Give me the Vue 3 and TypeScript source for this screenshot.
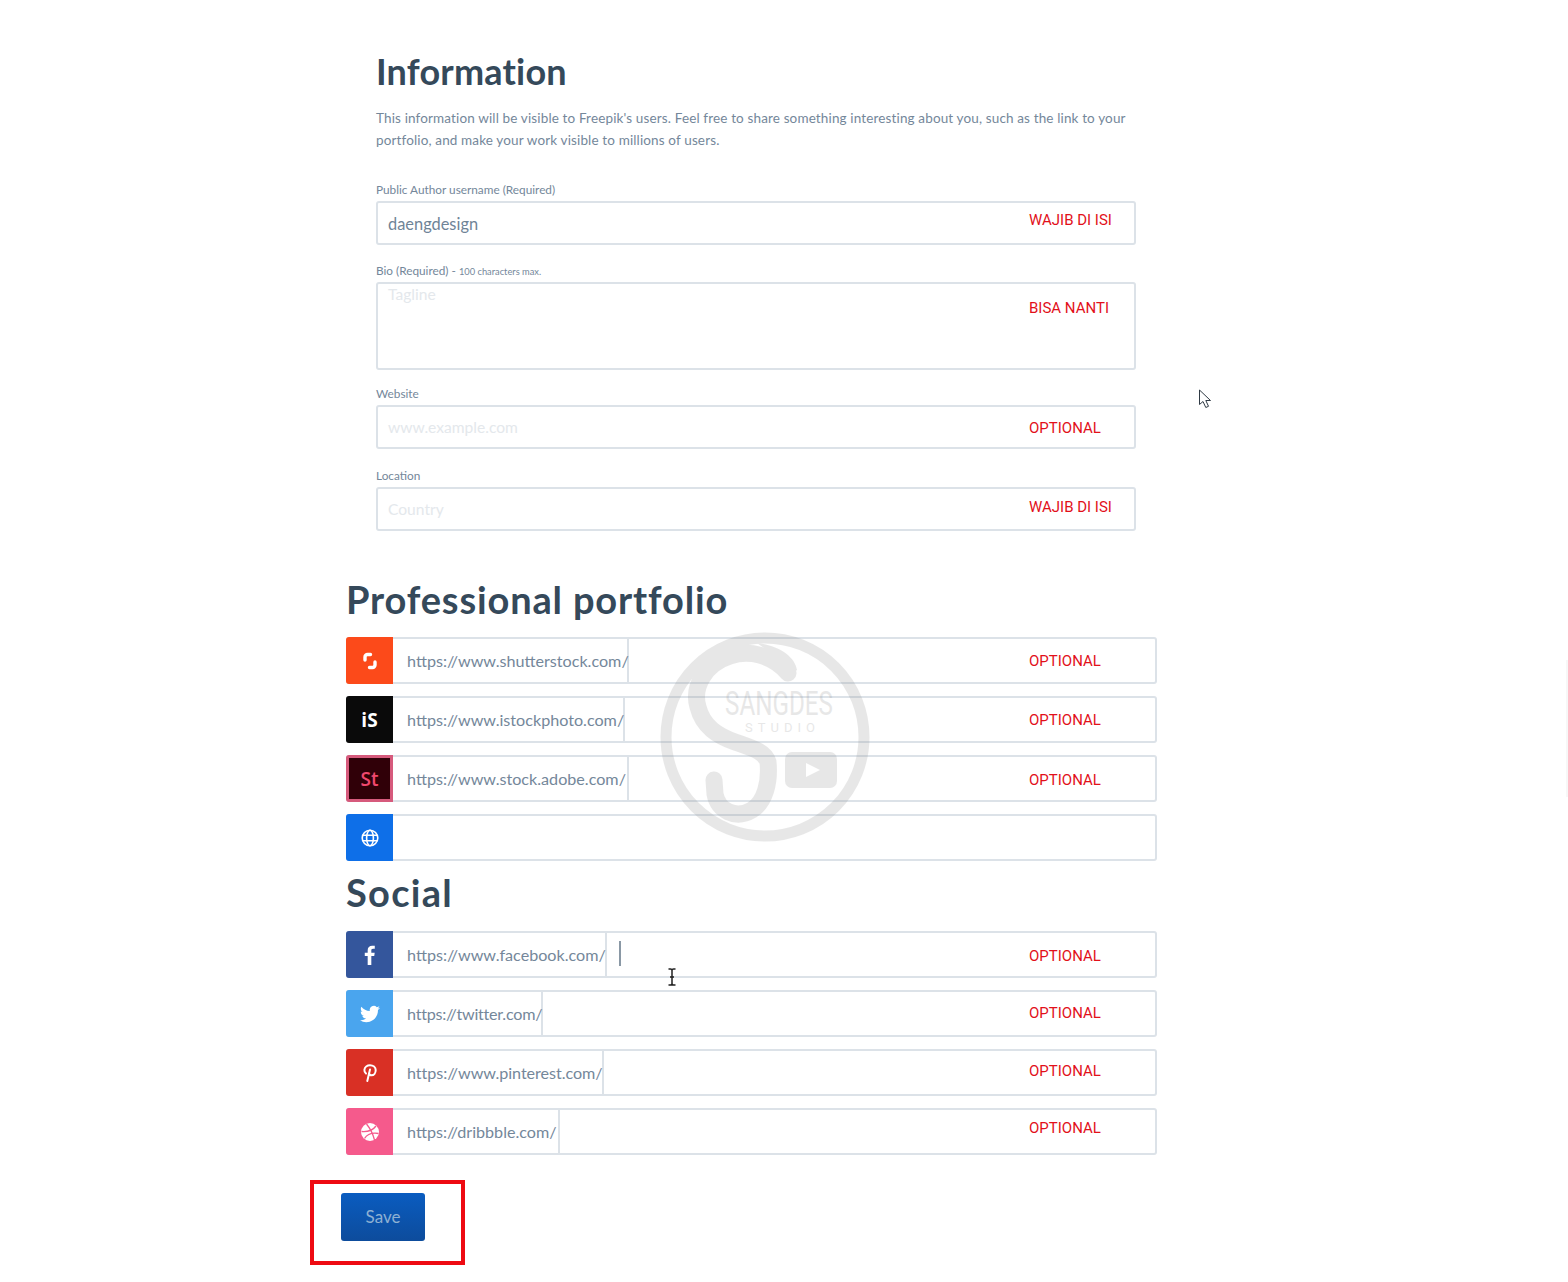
<script setup lang="ts">
type Field = { label: string; small?: string; height: number; gap: number; value?: string; placeholder?: string; note: string; noteTop: number }
type Row = { key: string; color: string; prefix?: string; prefixWidth?: number; spacing?: number; note?: string; noteTop?: number }

const fields: Field[] = [
  { label: 'Public Author username (Required)', height: 44, gap: 32, value: 'daengdesign', note: 'WAJIB DI ISI', noteTop: 7 },
  { label: 'Bio (Required) - ', small: '100 characters max.', height: 88, gap: 19, placeholder: 'Tagline', note: 'BISA NANTI', noteTop: 14 },
  { label: 'Website', height: 44, gap: 17, placeholder: 'www.example.com', note: 'OPTIONAL', noteTop: 11 },
  { label: 'Location', height: 44, gap: 20, placeholder: 'Country', note: 'WAJIB DI ISI', noteTop: 8 },
]

const portfolio: Row[] = [
  { key: 'shutterstock', color: '#fc4a1a', prefix: 'https://www.shutterstock.com/', prefixWidth: 236, note: 'OPTIONAL', noteTop: 12 },
  { key: 'istock', color: '#0a0a0a', prefix: 'https://www.istockphoto.com/', prefixWidth: 232, note: 'OPTIONAL', noteTop: 12 },
  { key: 'adobe', color: '#300008', prefix: 'https://www.stock.adobe.com/', prefixWidth: 236, note: 'OPTIONAL', noteTop: 13 },
  { key: 'web', color: '#0e6fe8' },
]

const social: Row[] = [
  { key: 'facebook', color: '#34569c', prefix: 'https://www.facebook.com/', prefixWidth: 214, note: 'OPTIONAL', noteTop: 13 },
  { key: 'twitter', color: '#4aa5ee', prefix: 'https://twitter.com/', prefixWidth: 150, spacing: -0.24, note: 'OPTIONAL', noteTop: 11 },
  { key: 'pinterest', color: '#d93025', prefix: 'https://www.pinterest.com/', prefixWidth: 211, spacing: -0.06, note: 'OPTIONAL', noteTop: 10 },
  { key: 'dribbble', color: '#f55a8c', prefix: 'https://dribbble.com/', prefixWidth: 167, note: 'OPTIONAL', noteTop: 8 },
]
</script>

<template>
  <div class="page">
    <section class="info">
      <h1 class="info-title">Information</h1>
      <p class="intro">
        This information will be visible to Freepik's users. Feel free to share something interesting about you, such as the link to your
        portfolio, and make your work visible to millions of users.
      </p>

      <div v-for="f in fields" :key="f.label" class="field" :style="{ marginTop: f.gap + 'px' }">
        <label class="label">{{ f.label }}<small v-if="f.small">{{ f.small }}</small></label>
        <div class="box" :class="{ tall: f.height > 44 }" :style="{ height: f.height + 'px' }">
          <span v-if="f.value" class="value">{{ f.value }}</span>
          <span v-else class="placeholder">{{ f.placeholder }}</span>
          <span class="note" :style="{ top: f.noteTop + 'px' }">{{ f.note }}</span>
        </div>
      </div>
    </section>

    <h2 class="title portfolio-title">Professional portfolio</h2>
    <div class="rows">
      <div v-for="r in portfolio" :key="r.key" class="row">
        <div class="icon" :class="r.key" :style="{ background: r.color }">
          <svg v-if="r.key === 'shutterstock'" width="18" height="18" viewBox="0 0 18 18" fill="none" stroke="#fff" stroke-width="3.4" stroke-linecap="round">
            <path d="M9.500 2.500H6.500A2.500 2.500 0 0 0 4 5V8" />
            <path d="M8.500 15.500H11.500A2.500 2.500 0 0 0 14 13V10" />
          </svg>
          <span v-else-if="r.key === 'istock'" class="glyph">iS</span>
          <span v-else-if="r.key === 'adobe'" class="glyph">St</span>
          <svg v-else width="18" height="18" viewBox="0 0 18 18" fill="none" stroke="#fff" stroke-width="1.6">
            <circle cx="9" cy="9" r="7.8" />
            <ellipse cx="9" cy="9" rx="3.400" ry="7.800" />
            <path d="M1.800 6.300H16.200M1.800 11.700H16.200" />
          </svg>
        </div>
        <div v-if="r.prefix" class="prefix" :style="{ width: r.prefixWidth + 'px', letterSpacing: (r.spacing ?? 0) + 'px' }">{{ r.prefix }}</div>
        <span v-if="r.note" class="note" :style="{ top: r.noteTop + 'px' }">{{ r.note }}</span>
      </div>
    </div>

    <h2 class="title social-title">Social</h2>
    <div class="rows">
      <div v-for="r in social" :key="r.key" class="row">
        <div class="icon" :style="{ background: r.color }">
          <svg v-if="r.key === 'facebook'" width="11" height="20" viewBox="0 0 12 22" fill="#fff">
            <path d="M8 22V12.200H11.200L11.700 8.400H8V6.100C8 5 8.300 4.200 9.900 4.200H11.800V.800C11.500.800 10.300.700 8.900.700 6 .700 4 2.400 4 5.700V8.400H.800V12.200H4V22Z" />
          </svg>
          <svg v-else-if="r.key === 'twitter'" width="20" height="20" viewBox="0 0 24 24" fill="#fff">
            <path d="M23.950 4.570a10 10 0 0 1-2.820.77 4.960 4.960 0 0 0 2.160-2.720c-.95.550-2 .96-3.130 1.190a4.920 4.920 0 0 0-8.380 4.480C7.690 8.100 4.070 6.130 1.640 3.160a4.820 4.820 0 0 0-.66 2.470c0 1.710.87 3.210 2.190 4.100a4.900 4.900 0 0 1-2.230-.62v.06a4.920 4.920 0 0 0 3.950 4.830 5 5 0 0 1-2.210.08 4.940 4.940 0 0 0 4.600 3.420A9.870 9.870 0 0 1 0 19.540a14 14 0 0 0 7.560 2.210c9.050 0 14-7.500 14-13.980 0-.21 0-.42-.02-.63a9.940 9.940 0 0 0 2.460-2.550z" />
          </svg>
          <svg v-else-if="r.key === 'pinterest'" width="14" height="18" viewBox="0 0 14 18" fill="none" stroke="#fff" stroke-width="2" stroke-linecap="round">
            <path d="M3 9.500C1.800 8.400 1.200 7.300 1.400 5.800 1.700 3 4.200 1.200 7 1.200c3.100 0 5.700 1.900 5.700 4.800 0 3-1.800 5.300-4.100 5.300-1.300 0-2.300-.8-2.400-1.700" />
            <path d="M7 5.500 4.300 17" />
          </svg>
          <svg v-else width="18" height="18" viewBox="0 0 18 18">
            <circle cx="9" cy="9" r="9" fill="#fff" />
            <g fill="none" stroke="#f55a8c" stroke-width="1.300">
              <path d="M5.500 1C8 4 11.500 9 13.500 17" />
              <path d="M.500 8.500C6 9 12 7 15 3" />
              <path d="M3.500 15.500C6 11.500 11 9.500 17.500 10.500" />
            </g>
          </svg>
        </div>
        <div class="prefix" :style="{ width: r.prefixWidth + 'px', letterSpacing: (r.spacing ?? 0) + 'px' }">{{ r.prefix }}</div>
        <span v-if="r.key === 'facebook'" class="caret"></span>
        <span class="note" :style="{ top: r.noteTop + 'px' }">{{ r.note }}</span>
      </div>
    </div>

    <div class="save-wrap">
      <button class="save">Save</button>
      <div class="highlight"></div>
    </div>

    <svg class="watermark" width="210" height="210" viewBox="0 0 210 210">
      <circle cx="105" cy="105" r="99" fill="none" stroke="#8c8c8c" stroke-width="11" />
      <path d="M128 41C112 22 88 18 70 24 45 32 32 55 38 75 43 95 58 104 75 110 95 117 105 120 108 130 110 150 105 170 92 178 75 188 58 178 55 162L54 148" fill="none" stroke="#8c8c8c" stroke-width="17" stroke-linecap="round" />
      <path d="M97 11C120 14 135 25 137 38L128 45C118 28 108 18 97 11Z" fill="#8c8c8c" />
      <text x="65" y="83" textLength="108" lengthAdjust="spacingAndGlyphs" class="wm-name">SANGDES</text>
      <text x="85" y="100" textLength="70" class="wm-studio">STUDIO</text>
      <rect x="125" y="120" width="52" height="36" rx="7" fill="#8c8c8c" />
      <path d="M146 131 160 138 146 145Z" fill="#fff" />
    </svg>

    <svg class="cursor-arrow" width="14" height="20" viewBox="0 0 14 20">
      <path d="M1.500 1V15.500L5 12.500 7.800 18.500 10.500 17.300 7.800 11.500H12.500Z" fill="#fff" stroke="#2f3a44" stroke-width="1" stroke-linejoin="round" />
    </svg>
    <svg class="cursor-text" width="10" height="18" viewBox="0 0 10 18" fill="none" stroke="#222" stroke-width="1.500">
      <path d="M1.500 1H3.500C4.500 1 5 1.500 5 2.500V15.500C5 16.500 4.500 17 3.500 17H1.500M8.500 1H6.500C5.500 1 5 1.500 5 2.500M5 15.500C5 16.500 5.500 17 6.500 17H8.500M3 9H7" />
    </svg>
    <div class="edge"></div>
  </div>
</template>

<style scoped>
.page {
  position: relative;
  height: 1282px;
  width: 1568px;
  padding-left: 346px;
  box-sizing: border-box;
  background: #fff;
  overflow: hidden;
  font-family: Lato, "Open Sans", sans-serif;
}

.info {
  width: 760px;
  margin-left: 30px;
  padding-top: 49px;
}

.info-title {
  margin: 0;
  font-size: 36px;
  line-height: 44px;
  font-weight: 700;
  letter-spacing: 0.2px;
  color: #35495a;
}

.intro {
  margin: 14px 0 0;
  font-size: 13.5px;
  line-height: 22px;
  letter-spacing: 0.14px;
  color: #74879a;
}

.label {
  display: block;
  height: 12px;
  line-height: 14px;
  font-size: 11.8px;
  color: #74879a;
  margin-bottom: 6px;
}

.label small {
  font-size: 9.3px;
}

.box {
  position: relative;
  box-sizing: border-box;
  border: 2px solid #dce2e8;
  border-radius: 3px;
  padding: 0 10px;
  display: flex;
  align-items: center;
  font-size: 16.4px;
}

.box.tall {
  align-items: flex-start;
  padding-top: 1px;
}

.value {
  color: #6f8497;
}

.placeholder {
  font-size: 15.6px;
  color: #e4e8ec;
}

.note {
  position: absolute;
  left: 651px;
  font-family: Roboto, "Liberation Sans", sans-serif;
  font-size: 15px;
  line-height: 20px;
  color: #e2101a;
  white-space: nowrap;
}

.title {
  margin: 0;
  font-size: 38px;
  line-height: 46px;
  font-weight: 700;
  letter-spacing: 0.85px;
  color: #35495a;
}

.portfolio-title {
  margin-top: 45px;
}

.social-title {
  margin-top: 8px;
  letter-spacing: 1.3px;
}

.social-title + .rows {
  margin-top: 16px;
}

.rows {
  width: 811px;
  margin-top: 15px;
  display: flex;
  flex-direction: column;
  gap: 12px;
}

.row {
  position: relative;
  display: flex;
  height: 47px;
  box-sizing: border-box;
  border: 2px solid #dce2e8;
  border-left: 0;
  border-radius: 3px;
}

.row .note {
  left: 683px;
}

.icon {
  flex: 0 0 47px;
  margin: -2px 0;
  border-radius: 3px 0 0 3px;
  display: flex;
  align-items: center;
  justify-content: center;
}

.icon.adobe {
  box-sizing: border-box;
  border: 3px solid #d65a7c;
}

.glyph {
  font-family: "Open Sans", sans-serif;
  font-size: 19px;
  font-weight: 700;
  color: #fff;
}

.adobe .glyph {
  color: #f0486e;
  font-weight: 600;
}

.prefix {
  box-sizing: border-box;
  padding-left: 14px;
  border-right: 2px solid #dce2e8;
  font-size: 16.15px;
  line-height: 43px;
  color: #74879a;
  white-space: nowrap;
}

.caret {
  width: 2px;
  height: 25px;
  margin: 8px 0 0 12px;
  background: #8a98a5;
}

.save-wrap {
  position: relative;
  margin-top: 38px;
  margin-left: -5px;
}

.save {
  display: block;
  width: 84px;
  height: 48px;
  padding: 0 0 2px;
  border: 0;
  border-radius: 3px;
  background: linear-gradient(#0a5cc0, #0d4c9c);
  color: #8fb1d3;
  font-family: inherit;
  font-size: 17px;
}

.highlight {
  position: absolute;
  left: -31px;
  top: -13px;
  width: 155px;
  height: 85px;
  box-sizing: border-box;
  border: 4px solid #ee0a12;
}

.watermark {
  position: absolute;
  left: 660px;
  top: 632px;
  opacity: 0.2;
  pointer-events: none;
}

.wm-name {
  font-family: Roboto, sans-serif;
  font-size: 34px;
  fill: #8c8c8c;
}

.wm-studio {
  font-family: Roboto, sans-serif;
  font-size: 13px;
  fill: #8c8c8c;
}

.cursor-arrow {
  position: absolute;
  left: 1198px;
  top: 389px;
}

.cursor-text {
  position: absolute;
  left: 667px;
  top: 968px;
}

.edge {
  position: absolute;
  right: 0;
  top: 660px;
  width: 2px;
  height: 137px;
  background: #f7f7f7;
}
</style>
